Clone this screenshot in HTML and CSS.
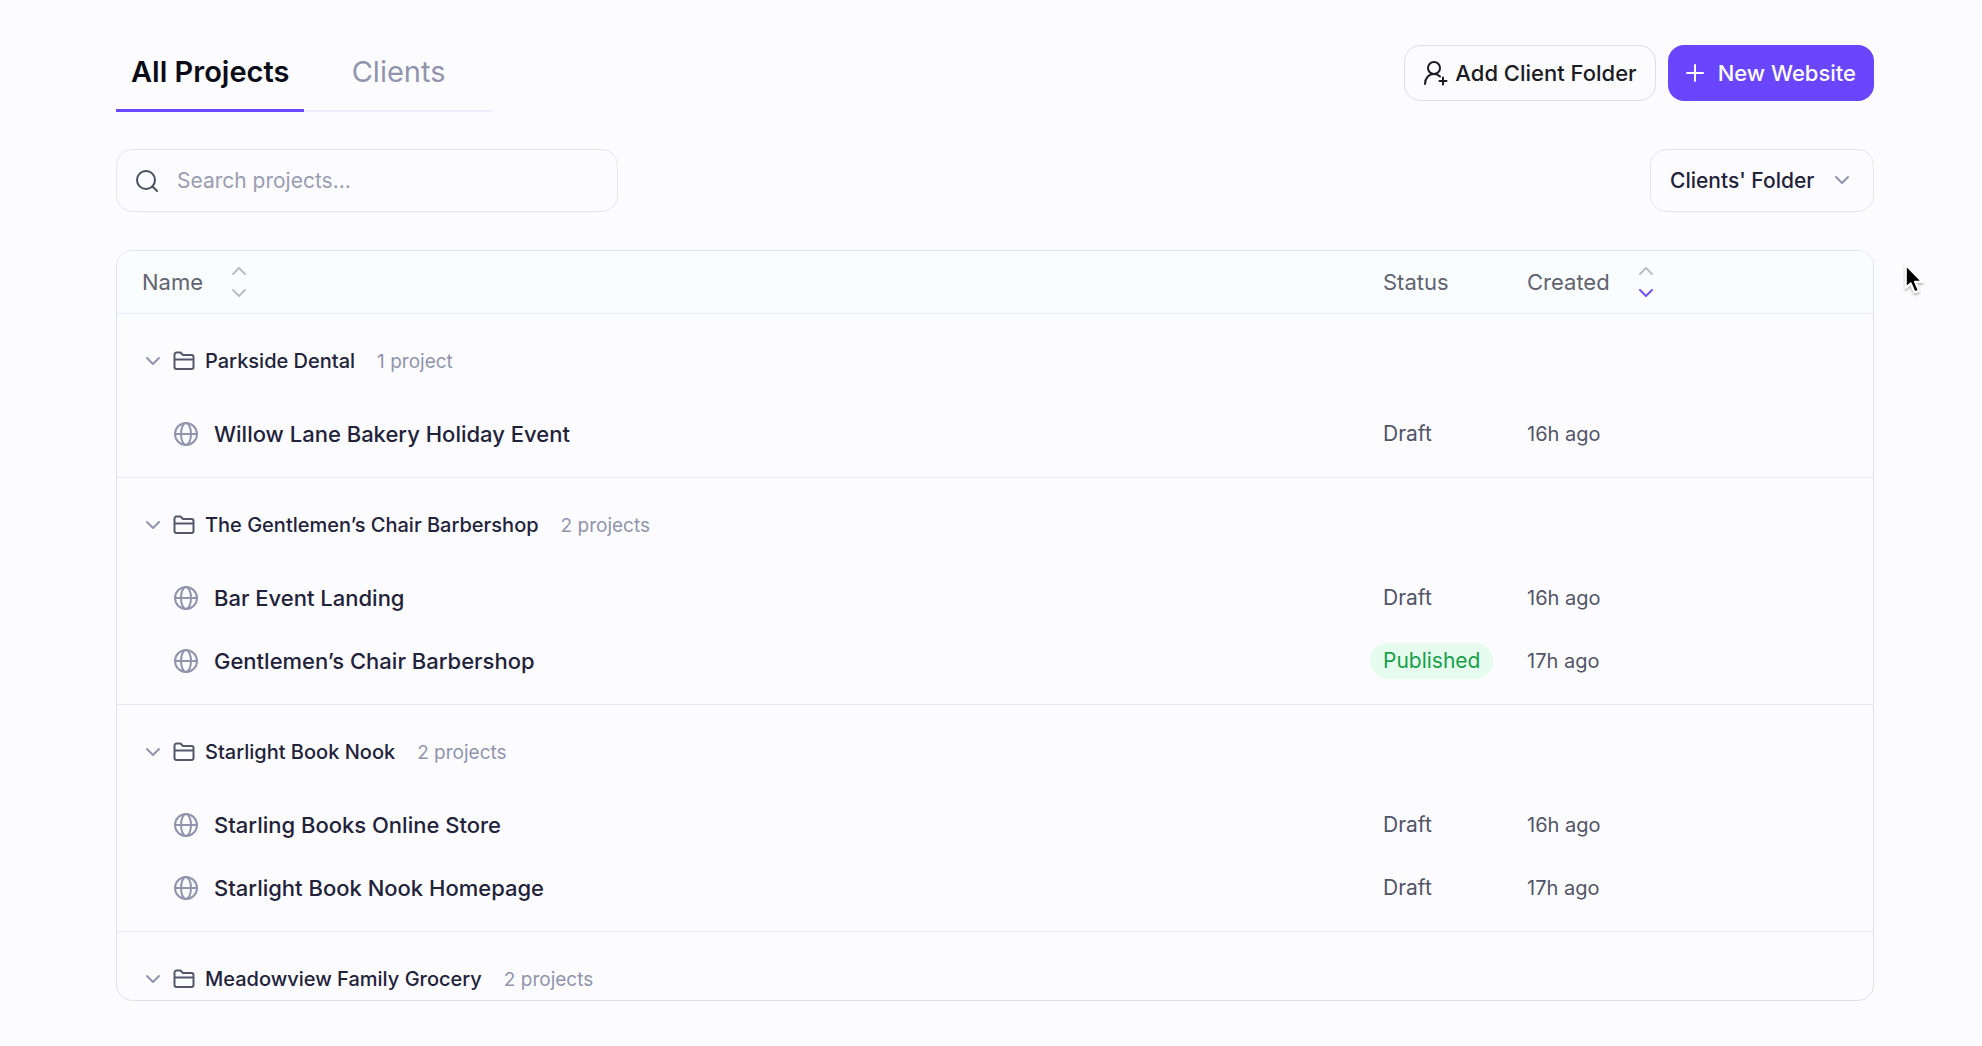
FILE: index.html
```
<!DOCTYPE html>
<html lang="en">
<head>
  <meta charset="UTF-8" />
  <meta name="viewport" content="width=device-width, initial-scale=1" />
  <title>All Projects</title>
  <link rel="stylesheet" href="styles.css">
</head>
<body>
  <!-- shared icons -->
  <svg class="sprite" aria-hidden="true">
    <symbol id="chevron-down" viewBox="0 0 16 16"><path d="M2 5l6 6 6-6" /></symbol>
    <symbol id="chevron-up" viewBox="0 0 16 16"><path d="M2 11l6-6 6 6" /></symbol>
    <symbol id="folder" viewBox="0 0 22 22"><path d="M1.500 17V4.500a2 2 0 0 1 2-2h4l2.500 2.500H18.500a2 2 0 0 1 2 2V17a2 2 0 0 1-2 2h-15a2 2 0 0 1-2-2zM1.500 9.500h19" /></symbol>
    <symbol id="globe" viewBox="0 0 24 24"><circle cx="12" cy="12" r="11" /><ellipse cx="12" cy="12" rx="5" ry="11" /><path d="M1 12h22" /></symbol>
  </svg>

  <main class="page">
    <header class="top">
      <div class="tabs" role="tablist">
        <button class="tab active" role="tab" aria-selected="true">All Projects</button>
        <button class="tab" role="tab" aria-selected="false">Clients</button>
      </div>
      <div class="actions">
        <button class="btn btn-outline">
          <svg class="icon-user" viewBox="0 0 26 26"><circle cx="11" cy="8" r="6" /><path d="M2 24c0-6 4-10 9-10 2.500 0 4.500 1 6 2.500M20 17.500v7M16.500 21h7" /></svg>
          Add Client Folder
        </button>
        <button class="btn btn-primary">
          <svg class="icon-plus" viewBox="0 0 18 18"><path d="M9 1v16M1 9h16" /></svg>
          New Website
        </button>
      </div>
    </header>

    <div class="toolbar">
      <label class="search">
        <svg class="icon-search" viewBox="0 0 24 24"><circle cx="11" cy="11" r="9" /><path d="M17.500 17.500L22 22" /></svg>
        <input type="search" placeholder="Search projects..." aria-label="Search projects" />
      </label>
      <div class="filter">
        <select aria-label="Folder filter">
          <option>Clients' Folder</option>
        </select>
        <svg class="chevron"><use href="#chevron-down" /></svg>
      </div>
    </div>

    <div class="table-box">
      <table class="projects">
        <thead>
          <tr>
            <th class="col-name" scope="col">
              <button class="sort">Name
                <span class="arrows"><svg><use href="#chevron-up" /></svg><svg><use href="#chevron-down" /></svg></span>
              </button>
            </th>
            <th class="col-status" scope="col"><span class="status">Status</span></th>
            <th class="col-created" scope="col" aria-sort="descending">
              <button class="sort">Created
                <span class="arrows"><svg><use href="#chevron-up" /></svg><svg class="on"><use href="#chevron-down" /></svg></span>
              </button>
            </th>
          </tr>
        </thead>
        <tbody>
          <tr class="group">
            <td colspan="3">
              <button class="folder"><svg class="chevron"><use href="#chevron-down" /></svg><svg class="icon-folder"><use href="#folder" /></svg>Parkside Dental <span class="count">1 project</span></button>
            </td>
          </tr>
          <tr class="project">
            <td><a href="#"><svg class="icon-globe"><use href="#globe" /></svg>Willow Lane Bakery Holiday Event</a></td>
            <td><span class="status">Draft</span></td>
            <td class="created">16h ago</td>
          </tr>
        </tbody>
        <tbody>
          <tr class="group">
            <td colspan="3">
              <button class="folder"><svg class="chevron"><use href="#chevron-down" /></svg><svg class="icon-folder"><use href="#folder" /></svg>The Gentlemen’s Chair Barbershop <span class="count">2 projects</span></button>
            </td>
          </tr>
          <tr class="project">
            <td><a href="#"><svg class="icon-globe"><use href="#globe" /></svg>Bar Event Landing</a></td>
            <td><span class="status">Draft</span></td>
            <td class="created">16h ago</td>
          </tr>
          <tr class="project">
            <td><a href="#"><svg class="icon-globe"><use href="#globe" /></svg>Gentlemen’s Chair Barbershop</a></td>
            <td><span class="status published">Published</span></td>
            <td class="created">17h ago</td>
          </tr>
        </tbody>
        <tbody>
          <tr class="group">
            <td colspan="3">
              <button class="folder"><svg class="chevron"><use href="#chevron-down" /></svg><svg class="icon-folder"><use href="#folder" /></svg>Starlight Book Nook <span class="count">2 projects</span></button>
            </td>
          </tr>
          <tr class="project">
            <td><a href="#"><svg class="icon-globe"><use href="#globe" /></svg>Starling Books Online Store</a></td>
            <td><span class="status">Draft</span></td>
            <td class="created">16h ago</td>
          </tr>
          <tr class="project">
            <td><a href="#"><svg class="icon-globe"><use href="#globe" /></svg>Starlight Book Nook Homepage</a></td>
            <td><span class="status">Draft</span></td>
            <td class="created">17h ago</td>
          </tr>
        </tbody>
        <tbody>
          <tr class="group">
            <td colspan="3">
              <button class="folder"><svg class="chevron"><use href="#chevron-down" /></svg><svg class="icon-folder"><use href="#folder" /></svg>Meadowview Family Grocery <span class="count">2 projects</span></button>
            </td>
          </tr>
        </tbody>
      </table>
    </div>
  </main>

  <svg class="cursor" viewBox="0 0 18 28" aria-hidden="true"><path d="M1.500 1.500v21l4.500-4 3.500 8 4-1.500-3.500-8h6.500z" /></svg>
</body>
</html>
```
FILE: styles.css
```
* { box-sizing: border-box; }

body {
  margin: 0;
  font-family: Inter, "Liberation Sans", sans-serif;
  font-size: 22px;
  color: #22223a;
  background: #fcfcfe;
}

button, input, select {
  font: inherit;
  color: inherit;
  background: none;
  border: 0;
  margin: 0;
  padding: 0;
}

button, select { cursor: pointer; }

svg {
  fill: none;
  stroke: currentColor;
  stroke-width: 2;
  stroke-linecap: round;
  stroke-linejoin: round;
  flex-shrink: 0;
}

.sprite { display: none; }

.page {
  display: flex;
  flex-direction: column;
  height: 100vh;
  padding: 45px 108px 45px 116px;
}

.top {
  display: flex;
  justify-content: space-between;
  align-items: flex-start;
}

.tabs {
  display: grid;
  grid-template-columns: 1fr 1fr;
  height: 67px;
  box-shadow: inset 0 -2px #efedfc;
}

.tab {
  padding: 0 15px 14px;
  font-size: 29px;
  color: #9194ad;
}

.tab.active {
  font-weight: 600;
  color: #0b0b18;
  box-shadow: inset 0 -3px #6a48fb;
}

.actions {
  display: flex;
  gap: 12px;
}

.btn {
  display: flex;
  align-items: center;
  height: 56px;
  padding: 0 18px;
  border-radius: 16px;
  font-weight: 500;
}

.btn-outline {
  gap: 6px;
  border: 1px solid #dddde6;
  color: #1b1b24;
}

.btn-primary {
  gap: 14px;
  background: #6946fd;
  color: #fff;
}

.icon-user { width: 26px; height: 26px; }
.icon-plus { width: 18px; height: 18px; }

.toolbar {
  display: flex;
  justify-content: space-between;
  margin: 37px 0 38px;
}

.search {
  display: flex;
  align-items: center;
  gap: 18px;
  width: 502px;
  height: 63px;
  padding: 0 18px;
  border: 1px solid #e4e4f4;
  border-radius: 16px;
}

.search input {
  flex: 1;
  min-width: 0;
  outline: 0;
  font-size: 21px;
}

.search input::placeholder { color: #9a9db2; }

.icon-search { width: 24px; height: 24px; color: #4b4d5c; }

.filter { position: relative; }

.filter select {
  appearance: none;
  height: 63px;
  padding: 0 58px 0 19px;
  border: 1px solid #e4e4f4;
  border-radius: 16px;
  font-size: 21px;
  font-weight: 500;
}

.chevron {
  width: 16px;
  height: 16px;
  color: #9194ad;
}

.filter .chevron {
  position: absolute;
  top: 23px;
  right: 24px;
  pointer-events: none;
}

.table-box {
  flex: 1;
  min-height: 0;
  overflow: hidden;
  border: 1px solid #e0e2ee;
  border-radius: 16px;
}

.projects {
  width: 100%;
  table-layout: fixed;
  border-spacing: 0;
}

.projects td { padding: 0; }

.projects th {
  height: 63px;
  padding: 0;
  font-weight: 400;
  text-align: left;
  color: #62636f;
  background: #fafdff;
  border-bottom: 1px solid #e6e6f4;
}

.projects .col-name { padding-left: 25px; }
.col-status { width: 144px; }
.projects .col-created { width: 359px; padding-left: 13px; }

.sort {
  display: flex;
  align-items: center;
  gap: 28px;
}

.arrows {
  display: flex;
  flex-direction: column;
  gap: 6px;
  color: #bcbcc6;
}

.arrows svg { width: 16px; height: 16px; }
.arrows .on { color: #7350fb; }

.group td {
  height: 88px;
  padding: 16px 0 10px 28px;
}

.folder {
  display: flex;
  align-items: center;
  font-size: 20px;
  font-weight: 500;
}

.icon-folder {
  width: 22px;
  height: 22px;
  margin: 0 10px 0 12px;
  color: #55576a;
}

.count {
  margin-left: 22px;
  font-size: 19px;
  font-weight: 400;
  color: #9194ad;
}

.project td { height: 63px; }

.project a {
  display: flex;
  align-items: center;
  gap: 16px;
  padding-left: 57px;
  font-weight: 500;
  color: inherit;
  text-decoration: none;
}

.icon-globe {
  width: 24px;
  height: 24px;
  color: #9194ad;
}

.project:last-child td {
  height: 76px;
  padding-bottom: 12px;
  border-bottom: 1px solid #e6e6f4;
}

.status {
  display: inline-block;
  padding: 0 13px;
  line-height: 36px;
  border-radius: 18px;
}

.project .status { font-size: 21px; color: #525468; }

.project .published {
  color: #17a049;
  background: #e6fcef;
}

.projects .created {
  padding-left: 13px;
  font-size: 20px;
  color: #525468;
}

/* pointer lies over the page */
.cursor {
  position: absolute;
  top: 263px;
  right: 58px;
  width: 20px;
  height: 31px;
  fill: #000;
  stroke: #fff;
  filter: drop-shadow(0 2px 1px rgba(0, 0, 0, 0.25));
}
```
